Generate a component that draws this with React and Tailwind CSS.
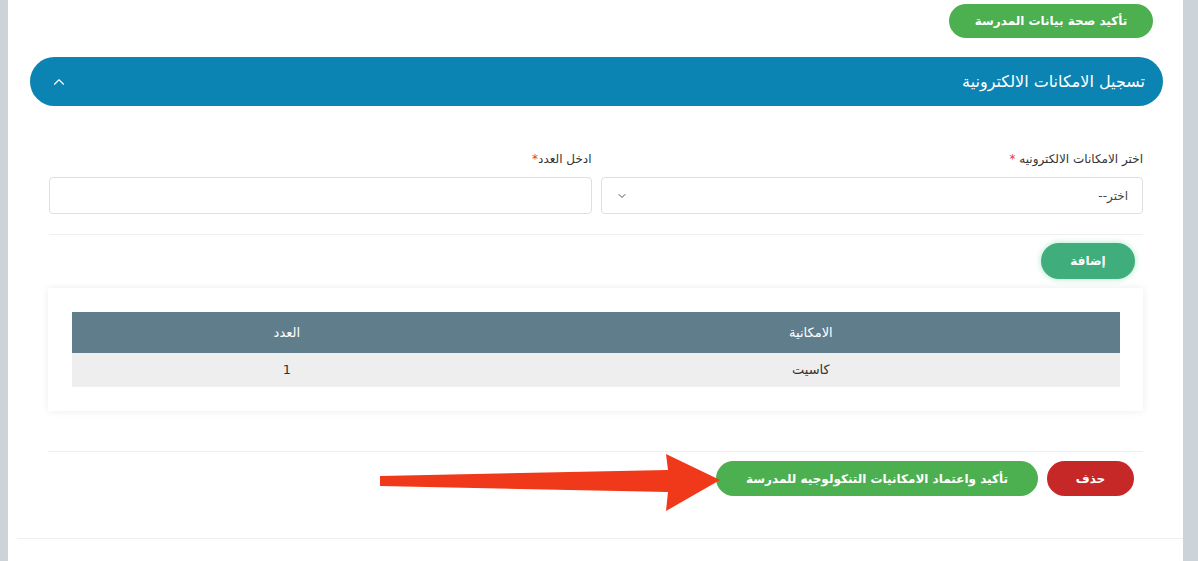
import { ChevronUp, ChevronDown } from "lucide-react";

const font = { fontFamily: '"DejaVu Sans", "Noto Sans", sans-serif' };

export default function App() {
  return (
    <div className="flex h-[561px] w-[1198px] overflow-hidden bg-[#ccd3d9]" style={font}>
      <div className="w-[8px] shrink-0" />
      <div dir="rtl" className="relative flex-1 bg-white">
        <div className="flex h-[42px] items-start pr-[30px] pt-[4px]">
          <button className="h-[34px] w-[204px] rounded-full bg-[#4caf50] text-[12px] font-bold text-white">
            تأكيد صحة بيانات المدرسة
          </button>
        </div>

        <div className="ml-[22px] mr-[20px] mt-[15px] flex h-[49px] items-center justify-between rounded-full bg-[#0b84b4] pl-[20px] pr-[18px] text-white">
          <span className="text-[16px]">تسجيل الامكانات الالكترونية</span>
          <ChevronUp size={18} strokeWidth={1.5} />
        </div>

        <div className="ml-[41px] mr-[40px] mt-[44px] grid grid-cols-2 gap-[9px]">
          <div>
            <label className="block text-[12px] text-[#333]">
              اختر الامكانات الالكترونيه <span className="text-[#e53935]">*</span>
            </label>
            <div className="mt-[9px] flex h-[37px] items-center justify-between rounded-[4px] border border-[#dcdfe3] pl-[14px] pr-[14px] text-[12px] text-[#444]">
              <span>اختر--</span>
              <ChevronDown size={12} className="text-[#555]" />
            </div>
          </div>
          <div>
            <label className="block text-[12px] text-[#333]">
              ادخل العدد<span className="text-[#e53935]">*</span>
            </label>
            <div className="mt-[9px] h-[37px] rounded-[4px] border border-[#dcdfe3]" />
          </div>
        </div>

        <div className="ml-[41px] mr-[40px] mt-[20px] border-t border-[#eceef0]" />

        <div className="flex h-[46px] items-start pr-[48px] pt-[8px]">
          <button className="h-[36px] w-[94px] rounded-full bg-[#3fae7c] text-[12px] font-bold text-white shadow-[0_0_6px_#a7e6c4]">
            إضافة
          </button>
        </div>

        <div className="ml-[40px] mr-[40px] mt-[7px] bg-white py-[24px] pl-[24px] pr-[23px] shadow-[0_0_8px_rgba(0,0,0,0.08)]">
          <table className="w-full border-collapse text-center text-[13px]">
            <thead>
              <tr className="h-[41px] bg-[#607d8b] text-white">
                <th className="w-[59%] font-normal">الامكانية</th>
                <th className="w-[41%] font-normal">العدد</th>
              </tr>
            </thead>
            <tbody>
              <tr className="h-[34px] bg-[#eeeeee] text-[#333]">
                <td>كاسيت</td>
                <td>1</td>
              </tr>
            </tbody>
          </table>
        </div>

        <div className="ml-[40px] mr-[40px] mt-[40px] border-t border-[#eceef0]" />

        <div className="flex items-center gap-[9px] pr-[49px] pt-[9px]">
          <button className="h-[35px] w-[87px] rounded-full bg-[#c62828] text-[12px] font-bold text-white">
            حذف
          </button>
          <button className="h-[35px] w-[322px] rounded-full bg-[#4caf50] text-[12px] font-bold text-white">
            تأكيد واعتماد الامكانيات التنكولوجيه للمدرسة
          </button>
        </div>

        <div className="ml-[9px] mt-[42px] border-t border-[#eceef0]" />

        <svg className="absolute left-[372px] top-[452px]" width="342" height="62" viewBox="0 0 342 62">
          <polygon points="0,24 288,18 286,2 340,28 286,59 288,40 0,34" fill="#f0391a" />
        </svg>
      </div>
      <div className="w-[15px] shrink-0" />
    </div>
  );
}
